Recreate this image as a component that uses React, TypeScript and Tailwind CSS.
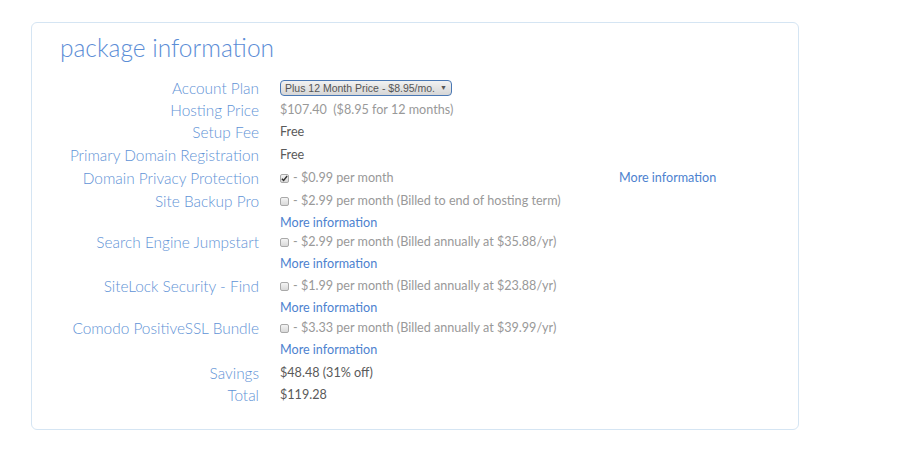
import React from 'react';

const Check = ({ checked = false }: { checked?: boolean }) => (
  <span className="inline-flex items-center justify-center w-[9px] h-[9px] rounded-[2px] border border-[#a9a9a9] bg-gradient-to-b from-[#f4f4f4] to-[#d9d9d9] mr-[4px] shrink-0">
    {checked && (
      <svg width="7" height="7" viewBox="0 0 8 8">
        <path d="M1 4.2 L3 6.3 L7 1.2" fill="none" stroke="#333" strokeWidth="1.6" />
      </svg>
    )}
  </span>
);

const More = () => <a className="text-[#4d82cf] cursor-pointer">More information</a>;

type Row = { label: string; value: React.ReactNode; more?: boolean; cls?: string };

const App = () => {
  const rows: Row[] = [
    {
      label: 'Account Plan',
      value: (
        <span className="inline-flex items-center h-[16px] px-[4px] rounded-[4px] border border-[#4a78b4] bg-gradient-to-b from-[#f2f2f2] to-[#d6d6d6] text-[10.5px] text-[#555] font-['Liberation_Sans',sans-serif]">
          Plus 12 Month Price - $8.95/mo.
          <span className="ml-[5px] text-[7px] text-[#555]">▼</span>
        </span>
      ),
    },
    { label: 'Hosting Price', value: <span className="text-[#999]">$107.40&nbsp;&nbsp;($8.95 for 12 months)</span> },
    { label: 'Setup Fee', value: <span className="text-[#5a5a5a]">Free</span> },
    { label: 'Primary Domain Registration', cls: 'mt-[1px]', value: <span className="text-[#5a5a5a]">Free</span> },
    {
      label: 'Domain Privacy Protection',
      cls: 'mt-[1px]',
      value: (
        <div className="flex items-center">
          <div className="flex items-center w-[339px] text-[#999]">
            <Check checked />- $0.99 per month
          </div>
          <More />
        </div>
      ),
    },
    {
      label: 'Site Backup Pro',
      cls: 'mt-[1px]',
      more: true,
      value: <div className="flex items-center text-[#999]"><Check />- $2.99 per month (Billed to end of hosting term)</div>,
    },
    {
      label: 'Search Engine Jumpstart',
      more: true,
      cls: '-mt-[3px]',
      value: <div className="flex items-center text-[#999]"><Check />- $2.99 per month (Billed annually at $35.88/yr)</div>,
    },
    {
      label: 'SiteLock Security - Find',
      more: true,
      value: <div className="flex items-center text-[#999]"><Check />- $1.99 per month (Billed annually at $23.88/yr)</div>,
    },
    {
      label: 'Comodo PositiveSSL Bundle',
      more: true,
      cls: '-mt-[2px]',
      value: <div className="flex items-center text-[#999]"><Check />- $3.33 per month (Billed annually at $39.99/yr)</div>,
    },
    { label: 'Savings', cls: 'mt-[1px]', value: <span className="text-[#5a5a5a]">$48.48 (31% off)</span> },
    { label: 'Total', value: <span className="text-[#5a5a5a]">$119.28</span> },
  ];

  return (
    <div className="w-[910px] h-[456px] bg-white font-['Lato',sans-serif] pt-[22px] pl-[31px]">
      <div className="w-[768px] h-[408px] border border-[#d5e5f3] rounded-[6px] pt-[11px]">
        <h1 className="pl-[28px] text-[24.5px] leading-[28px] font-light text-[#5b8dd6] mb-[15px]">package information</h1>
        <div className="grid grid-cols-[227px_1fr] gap-x-[21px]">
          {rows.map((r, i) => (
            <React.Fragment key={i}>
              <div className={`text-right text-[15.4px] leading-[22px] font-light text-[#5f93d6] ${r.cls ?? ''}`}>{r.label}</div>
              <div className={`text-[12.6px] leading-[22px] ${r.cls ?? ''}`}>
                <div className="h-[22px] flex items-center">{r.value}</div>
                {r.more && (
                  <div className="h-[22px] flex items-center">
                    <More />
                  </div>
                )}
              </div>
            </React.Fragment>
          ))}
        </div>
      </div>
    </div>
  );
};

export default App;
